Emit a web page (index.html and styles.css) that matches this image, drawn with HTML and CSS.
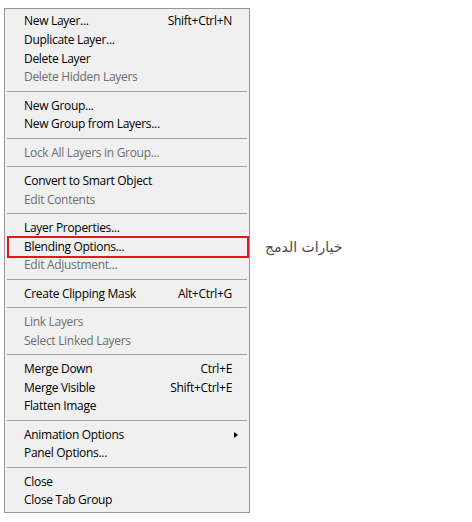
FILE: index.html
```html
<!DOCTYPE html>
<html>
<head>
<meta charset="utf-8">
<link rel="stylesheet" href="styles.css">
</head>
<body>
<div class="page">
  <div class="menu">
    <div class="item"><span>New Layer...</span><span class="key">Shift+Ctrl+N</span></div>
    <div class="item"><span>Duplicate Layer...</span></div>
    <div class="item"><span>Delete Layer</span></div>
    <div class="item off"><span>Delete Hidden Layers</span></div>
    <div class="sep"></div>
    <div class="item"><span>New Group...</span></div>
    <div class="item"><span>New Group from Layers...</span></div>
    <div class="sep"></div>
    <div class="item off"><span>Lock All Layers in Group...</span></div>
    <div class="sep"></div>
    <div class="item"><span>Convert to Smart Object</span></div>
    <div class="item off"><span>Edit Contents</span></div>
    <div class="sep"></div>
    <div class="item"><span>Layer Properties...</span></div>
    <div class="item marked"><span>Blending Options...</span><span class="note" dir="rtl">خيارات الدمج</span></div>
    <div class="item off"><span>Edit Adjustment...</span></div>
    <div class="sep"></div>
    <div class="item"><span>Create Clipping Mask</span><span class="key">Alt+Ctrl+G</span></div>
    <div class="sep"></div>
    <div class="item off"><span>Link Layers</span></div>
    <div class="item off"><span>Select Linked Layers</span></div>
    <div class="sep"></div>
    <div class="item"><span>Merge Down</span><span class="key">Ctrl+E</span></div>
    <div class="item"><span>Merge Visible</span><span class="key">Shift+Ctrl+E</span></div>
    <div class="item"><span>Flatten Image</span></div>
    <div class="sep"></div>
    <div class="item sub"><span>Animation Options</span><span class="arrow"></span></div>
    <div class="item"><span>Panel Options...</span></div>
    <div class="sep"></div>
    <div class="item"><span>Close</span></div>
    <div class="item"><span>Close Tab Group</span></div>
  </div>
</div>
</body>
</html>
```

FILE: styles.css
```css
html, body {
  margin: 0;
  padding: 0;
  background: #ffffff;
}
.page {
  padding: 8px 0 0 4px;
}
.menu {
  width: 244px;
  border: 1px solid #979797;
  background: #f0f0f0;
  padding: 3px 0 2px 0;
  font-family: "Open Sans", "Noto Sans", sans-serif;
  font-size: 12px;
  letter-spacing: -0.3px;
  color: #000000;
}
.item {
  position: relative;
  height: 18.75px;
  line-height: 18.75px;
  padding: 0 17px 0 19px;
  display: flex;
  justify-content: space-between;
  align-items: center;
  white-space: nowrap;
}
.item.off {
  color: #6d6d6d;
}
.sep {
  height: 1px;
  margin: 4px 2px 4.5px 2px;
  background: #a0a0a0;
}
.arrow {
  width: 0;
  height: 0;
  margin-right: -6px;
  border-top: 3.5px solid transparent;
  border-bottom: 3.5px solid transparent;
  border-left: 4px solid #000000;
}
.marked::after {
  content: "";
  position: absolute;
  left: 2px;
  right: 0;
  top: -2px;
  bottom: -2px;
  border: 2px solid #e8141f;
}
.note {
  position: absolute;
  left: 260px;
  top: 0;
  font-family: "DejaVu Sans", sans-serif;
  font-size: 14px;
  letter-spacing: 0;
  color: #4a4a4a;
}
```
